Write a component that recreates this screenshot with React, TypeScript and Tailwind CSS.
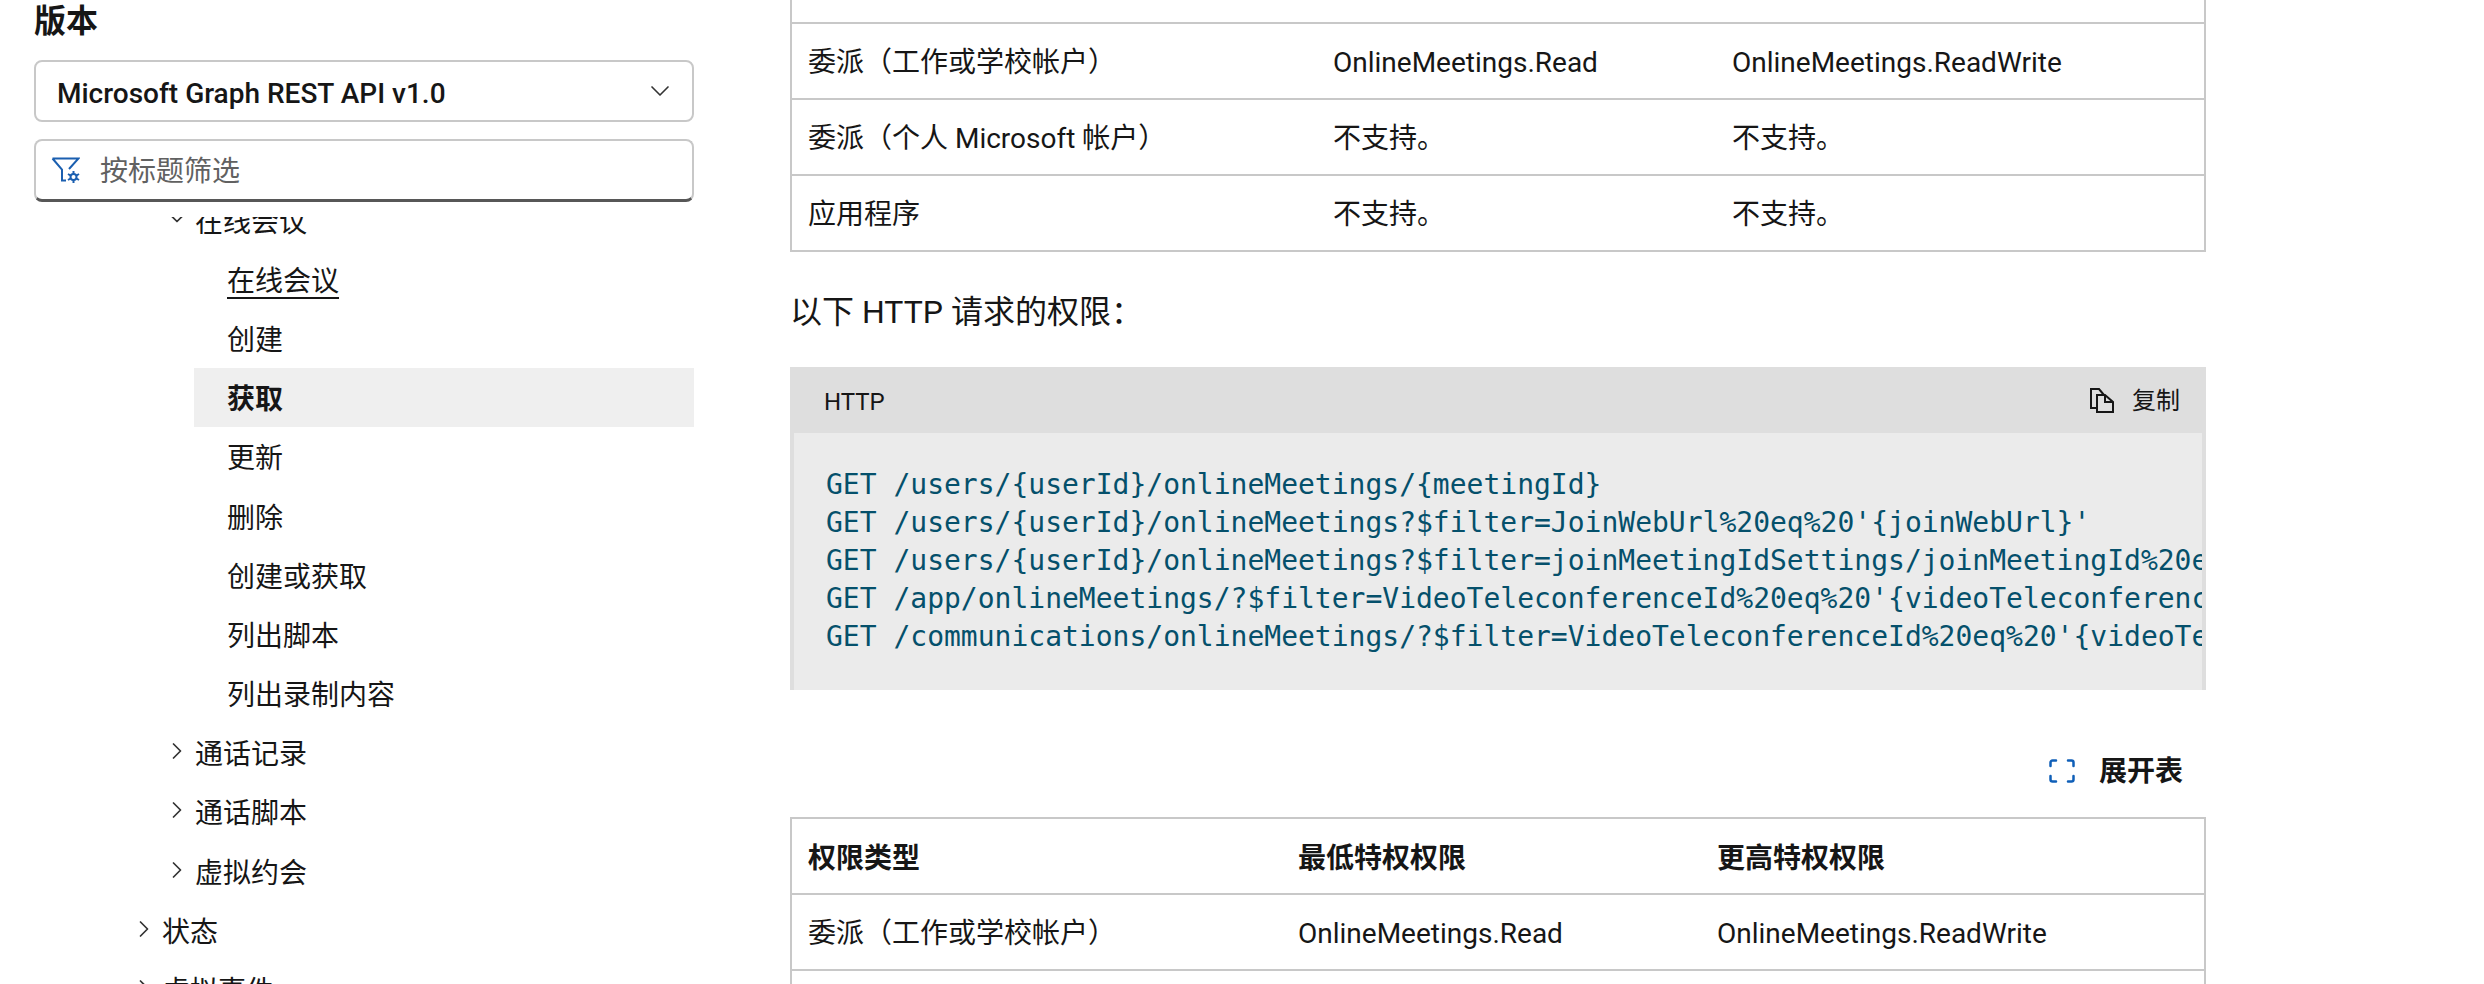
import React from 'react';
import { ChevronDown, ChevronRight } from 'lucide-react';

const SANS = "font-['Roboto','Noto_Sans_CJK_SC',sans-serif]";

const CODE_LINES = [
  "GET /users/{userId}/onlineMeetings/{meetingId}",
  "GET /users/{userId}/onlineMeetings?$filter=JoinWebUrl%20eq%20'{joinWebUrl}'",
  "GET /users/{userId}/onlineMeetings?$filter=joinMeetingIdSettings/joinMeetingId%20eq%20'{joinMeetingId}'",
  "GET /app/onlineMeetings/?$filter=VideoTeleconferenceId%20eq%20'{videoTeleconferenceId}'",
  "GET /communications/onlineMeetings/?$filter=VideoTeleconferenceId%20eq%20'{videoTeleconferenceId}'",
];

const ROWS = [
  ['委派（工作或学校帐户）', 'OnlineMeetings.Read', 'OnlineMeetings.ReadWrite'],
  ['委派（个人 Microsoft 帐户）', '不支持。', '不支持。'],
  ['应用程序', '不支持。', '不支持。'],
];

type TreeRow = { label: string; level: 2 | 3 | 4; open?: boolean; closed?: boolean; current?: boolean; selected?: boolean };

const TREE: TreeRow[] = [
  { label: '在线会议', level: 3, open: true },
  { label: '在线会议', level: 4, current: true },
  { label: '创建', level: 4 },
  { label: '获取', level: 4, selected: true },
  { label: '更新', level: 4 },
  { label: '删除', level: 4 },
  { label: '创建或获取', level: 4 },
  { label: '列出脚本', level: 4 },
  { label: '列出录制内容', level: 4 },
  { label: '通话记录', level: 3, closed: true },
  { label: '通话脚本', level: 3, closed: true },
  { label: '虚拟约会', level: 3, closed: true },
  { label: '状态', level: 2, closed: true },
  { label: '虚拟事件', level: 2, closed: true },
];

const FilterIcon = () => (
  <svg width="29" height="27" viewBox="0 0 29 27" fill="none" stroke="#1b5fb0" strokeWidth="2">
    <path d="M1.5 1.5h26l-9.5 10.5M1.5 1.5l9.500 11v11h4" />
    <circle cx="22.5" cy="20" r="3" />
    <path d="M22.5 14v3M22.5 23v3M17 17l2.5 1.5M25.5 21.5l2.5 1.5M17 23l2.5-1.5M25.5 18.500l2.500-1.500" />
  </svg>
);

const CopyIcon = () => (
  <svg width="25" height="25" viewBox="0 0 25 25" fill="none" stroke="#161616" strokeWidth="2">
    <path d="M7 20H1V1h8l5 6" />
    <path d="M7 7h8l8 7v10H7zM15 7v7h8" />
  </svg>
);

const ExpandIcon = () => (
  <svg width="26" height="24" viewBox="0 0 26 24" fill="none" stroke="#0f5fb8" strokeWidth="2.5" strokeLinecap="round">
    <path d="M7 1.500H3.500A2 2 0 0 0 1.500 3.500V7M19 1.500h3.500a2 2 0 0 1 2 2V7M7 22.500H3.500a2 2 0 0 1-2-2V17M19 22.500h3.500a2 2 0 0 0 2-2V17" />
  </svg>
);

const PermissionTable = ({ col1, col2 }: { col1: string; col2: string }) => (
  <table className="w-full table-fixed border-collapse text-[28px] leading-[40px] text-[#161616]">
    <colgroup>
      <col className={col1} />
      <col className={col2} />
      <col />
    </colgroup>
    <thead>
      <tr className="h-[76px]">
        <th className="border-2 border-r-0 border-[#c8c8c8] px-4 pt-[5px] text-left font-semibold">权限类型</th>
        <th className="border-y-2 border-[#c8c8c8] px-4 pt-[5px] text-left font-semibold">最低特权权限</th>
        <th className="border-2 border-l-0 border-[#c8c8c8] px-4 pt-[5px] text-left font-semibold">更高特权权限</th>
      </tr>
    </thead>
    <tbody>
      {ROWS.map(row => (
        <tr key={row[0]} className="h-[76px]">
          <td className="border-2 border-r-0 border-[#c8c8c8] px-4 pt-[4px]">{row[0]}</td>
          <td className="border-y-2 border-[#c8c8c8] px-4 pt-[4px]">{row[1]}</td>
          <td className="border-2 border-l-0 border-[#c8c8c8] px-4 pt-[4px]">{row[2]}</td>
        </tr>
      ))}
    </tbody>
  </table>
);

const TreeItem = ({ row }: { row: TreeRow }) => {
  const indent = row.level === 2 ? 'pl-[96px]' : row.level === 3 ? 'pl-[129px]' : 'pl-[160px]';
  return (
    <div className={`flex h-[59.2px] items-center ${indent} text-[28px] text-[#161616]`}>
      {row.level === 4 ? (
        <span className={`flex h-full w-full items-center pl-[33px] pt-[6px] ${row.selected ? 'bg-[#efefef] font-semibold' : ''}`}>
          <span className={row.current ? 'underline underline-offset-[6px]' : ''}>{row.label}</span>
        </span>
      ) : (
        <>
          {row.open
            ? <ChevronDown className="-mt-[4px] h-[28px] w-[28px] shrink-0 text-[#333]" strokeWidth={1.5} />
            : <ChevronRight className="-mt-[2px] h-[28px] w-[28px] shrink-0 text-[#333]" strokeWidth={1.5} />}
          <span className="ml-[4px] pt-[6px]">{row.label}</span>
        </>
      )}
    </div>
  );
};

export default function App() {
  return (
    <div className={`flex h-[984px] w-[2484px] overflow-hidden bg-white ${SANS}`}>
      <aside className="ml-[34px] flex w-[660px] shrink-0 flex-col">
        <h2 className="h-[60px] pt-[1px] text-[32px] font-semibold leading-[40px] text-[#161616]">版本</h2>
        <div className="flex h-[62px] items-center justify-between rounded-lg border-2 border-[#c8c8c8] pl-[21px] pr-[16px] text-[28px] font-medium text-[#161616]">
          <span className="pt-[5px]">Microsoft Graph REST API v1.0</span>
          <ChevronDown className="h-[32px] w-[32px] text-[#333]" strokeWidth={1.25} />
        </div>
        <div className="mt-[17px] flex h-[63px] items-center rounded-lg border-2 border-b-[3px] border-[#c8c8c8] border-b-[#575757] pl-[15px] text-[28px] text-[#616161]">
          <FilterIcon />
          <span className="ml-[20px] pt-[4px]">按标题筛选</span>
        </div>
        <div className="mt-[15px] min-h-0 flex-1 overflow-hidden">
          <div className="-mt-[27px]">
            {TREE.map((row, i) => <TreeItem key={i} row={row} />)}
          </div>
        </div>
      </aside>

      <main className="ml-[96px] w-[1416px] shrink-0">
        <div className="-mt-[54px]">
          <PermissionTable col1="w-[526px]" col2="w-[399px]" />
        </div>
        <p className="mb-[31px] mt-[36px] text-[32px] leading-[48px] text-[#161616]">以下 HTTP 请求的权限：</p>
        <div className="bg-[#dedede]">
          <div className="flex h-[66px] items-center justify-between pl-[34px] pr-[26px] text-[24px] text-[#161616]">
            <span className="pt-[3px]">HTTP</span>
            <span className="flex items-center gap-[17px]">
              <CopyIcon />
              <span className="pt-[1px]">复制</span>
            </span>
          </div>
          <div className="mx-[4px] mb-[4px] overflow-hidden bg-[#ebebeb] pb-[34px] pl-[32px] pt-[33px]">
            <pre className="font-['DejaVu_Sans_Mono',monospace] text-[28px] leading-[38px] text-[#05506b]">
              {CODE_LINES.join('\n')}
            </pre>
          </div>
        </div>
        <div className="mb-[22px] mt-[57px] flex h-[48px] items-center justify-end pr-[23px]">
          <ExpandIcon />
          <span className="ml-[24px] pt-[2px] text-[28px] font-semibold text-[#161616]">展开表</span>
        </div>
        <PermissionTable col1="w-[491px]" col2="w-[419px]" />
      </main>
    </div>
  );
}
